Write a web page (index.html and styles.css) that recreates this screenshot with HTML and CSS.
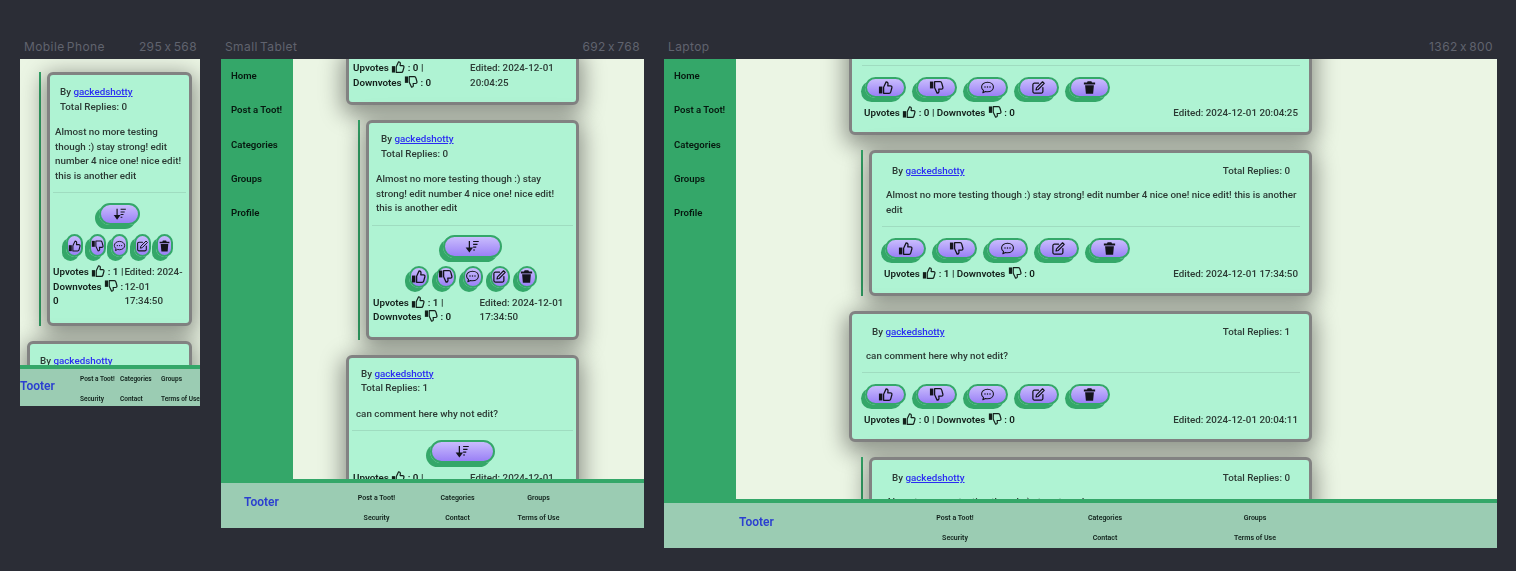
FILE: index.html
```html
<!DOCTYPE html>
<html lang="en">
<head>
  <meta charset="UTF-8" />
  <meta name="viewport" content="width=device-width, initial-scale=1.0" />
  <title>Tooter - Responsive Preview</title>
  <link rel="stylesheet" href="styles.css">
</head>
<body>
  <!-- ICONS -->
  <svg class="icon-defs" xmlns="http://www.w3.org/2000/svg">
    <symbol id="i-up" viewBox="0 0 24 24">
      <rect x="1.5" y="10.5" width="5.5" height="11" fill="currentColor"/>
      <path d="M9 11.5 13 3c2 0 3.2 1.5 3 3.4L15.6 9.5H20c1.6 0 2.6 1.400 2.200 2.900l-1.900 6.900c-.3 1.200-1.200 2-2.500 2H9z" fill="none" stroke="currentColor" stroke-width="2" stroke-linejoin="round"/>
    </symbol>
    <symbol id="i-down" viewBox="0 0 24 24">
      <rect x="1.5" y="2.5" width="5.5" height="11" fill="currentColor"/>
      <path d="M9 12.500 13 21c2 0 3.200-1.500 3-3.400l-.4-3.100H20c1.600 0 2.600-1.400 2.200-2.900L20.300 4.700c-.3-1.200-1.200-2-2.500-2H9z" fill="none" stroke="currentColor" stroke-width="2" stroke-linejoin="round"/>
    </symbol>
    <symbol id="i-chat" viewBox="0 0 24 24">
      <path d="M12 3.500c5.500 0 9.500 3.400 9.500 7.700s-4 7.700-9.500 7.700c-1.200 0-2.300-.2-3.300-.5L4.500 20.500l1.100-3.800C3.600 15.300 2.500 13.400 2.500 11.200 2.500 6.900 6.500 3.500 12 3.500z" fill="none" stroke="currentColor" stroke-width="1.700" stroke-linejoin="round"/>
      <circle cx="8" cy="11.200" r="1.200" fill="currentColor"/>
      <circle cx="12" cy="11.200" r="1.200" fill="currentColor"/>
      <circle cx="16" cy="11.200" r="1.200" fill="currentColor"/>
    </symbol>
    <symbol id="i-edit" viewBox="0 0 24 24">
      <path d="M12 5H5.500A2.500 2.500 0 0 0 3 7.500v11A2.500 2.500 0 0 0 5.500 21h11a2.500 2.500 0 0 0 2.500-2.500V12" fill="none" stroke="currentColor" stroke-width="2" stroke-linecap="round"/>
      <path d="M18.500 2.800 21.200 5.500 11.500 15.200 8 16l.8-3.500z" fill="none" stroke="currentColor" stroke-width="1.800" stroke-linejoin="round"/>
    </symbol>
    <symbol id="i-trash" viewBox="0 0 24 24">
      <path d="M9 2h6l1 2h5v3H3V4h5z" fill="currentColor"/>
      <path d="M5 8.500h14L17.800 22H6.200z" fill="currentColor"/>
    </symbol>
    <symbol id="i-sort" viewBox="0 0 24 24">
      <path d="M7 3v15M3 14.500 7 20l4-5.500z" fill="currentColor" stroke="currentColor" stroke-width="2"/>
      <path d="M13 4h9M13 8.500h7M13 13h5M13 17.500h3" fill="none" stroke="currentColor" stroke-width="1.800"/>
    </symbol>
  </svg>

  <div class="canvas">

    <!-- MOBILE PHONE -->
    <section class="frame frame-phone">
      <div class="frame-head"><span>Mobile Phone</span><span>295 x 568</span></div>
      <div class="screen">
        <div class="page">
          <main class="feed">
            <div class="reply">
              <article class="card">
                <div class="card-head"><span>By <a href="#">gackedshotty</a></span><span>Total Replies: 0</span></div>
                <p class="card-text">Almost no more testing though :) stay strong! edit number 4 nice one! nice edit! this is another edit</p>
                <hr>
                <div class="sort-row"><button class="btn btn-sort"><svg class="icon"><use href="#i-sort"/></svg></button></div>
                <div class="actions">
                  <button class="btn"><svg class="icon"><use href="#i-up"/></svg></button>
                  <button class="btn"><svg class="icon"><use href="#i-down"/></svg></button>
                  <button class="btn"><svg class="icon"><use href="#i-chat"/></svg></button>
                  <button class="btn"><svg class="icon"><use href="#i-edit"/></svg></button>
                  <button class="btn"><svg class="icon"><use href="#i-trash"/></svg></button>
                </div>
                <div class="stats">
                  <div class="votes">Upvotes <svg class="icon-sm"><use href="#i-up"/></svg> : 1 | Downvotes <svg class="icon-sm"><use href="#i-down"/></svg> : 0</div>
                  <div class="edited">Edited: 2024-12-01 17:34:50</div>
                </div>
              </article>
            </div>
            <article class="card">
              <div class="card-head"><span>By <a href="#">gackedshotty</a></span><span>Total Replies: 1</span></div>
              <p class="card-text">can comment here why not edit?</p>
            </article>
          </main>
        </div>
        <footer class="site-footer">
          <a class="brand" href="#">Tooter</a>
          <div class="footer-links">
            <a href="#">Post a Toot!</a><a href="#">Categories</a><a href="#">Groups</a>
            <a href="#">Security</a><a href="#">Contact</a><a href="#">Terms of Use</a>
          </div>
        </footer>
      </div>
    </section>

    <!-- SMALL TABLET -->
    <section class="frame frame-tablet">
      <div class="frame-head"><span>Small Tablet</span><span>692 x 768</span></div>
      <div class="screen">
        <div class="page">
          <nav class="side-nav">
            <a href="#">Home</a><a href="#">Post a Toot!</a><a href="#">Categories</a><a href="#">Groups</a><a href="#">Profile</a>
          </nav>
          <main class="feed">
            <article class="card">
              <div class="stats">
                <div class="votes">Upvotes <svg class="icon-sm"><use href="#i-up"/></svg> : 0 | Downvotes <svg class="icon-sm"><use href="#i-down"/></svg> : 0</div>
                <div class="edited">Edited: 2024-12-01 20:04:25</div>
              </div>
            </article>
            <div class="reply">
              <article class="card">
                <div class="card-head"><span>By <a href="#">gackedshotty</a></span><span>Total Replies: 0</span></div>
                <p class="card-text">Almost no more testing though :) stay strong! edit number 4 nice one! nice edit! this is another edit</p>
                <hr>
                <div class="sort-row"><button class="btn btn-sort"><svg class="icon"><use href="#i-sort"/></svg></button></div>
                <div class="actions">
                  <button class="btn"><svg class="icon"><use href="#i-up"/></svg></button>
                  <button class="btn"><svg class="icon"><use href="#i-down"/></svg></button>
                  <button class="btn"><svg class="icon"><use href="#i-chat"/></svg></button>
                  <button class="btn"><svg class="icon"><use href="#i-edit"/></svg></button>
                  <button class="btn"><svg class="icon"><use href="#i-trash"/></svg></button>
                </div>
                <div class="stats">
                  <div class="votes">Upvotes <svg class="icon-sm"><use href="#i-up"/></svg> : 1 | Downvotes <svg class="icon-sm"><use href="#i-down"/></svg> : 0</div>
                  <div class="edited">Edited: 2024-12-01 17:34:50</div>
                </div>
              </article>
            </div>
            <article class="card">
              <div class="card-head"><span>By <a href="#">gackedshotty</a></span><span>Total Replies: 1</span></div>
              <p class="card-text">can comment here why not edit?</p>
              <hr>
              <div class="sort-row"><button class="btn btn-sort"><svg class="icon"><use href="#i-sort"/></svg></button></div>
              <div class="stats">
                <div class="votes">Upvotes <svg class="icon-sm"><use href="#i-up"/></svg> : 0 | Downvotes <svg class="icon-sm"><use href="#i-down"/></svg> : 0</div>
                <div class="edited">Edited: 2024-12-01 20:04:11</div>
              </div>
            </article>
          </main>
        </div>
        <footer class="site-footer">
          <a class="brand" href="#">Tooter</a>
          <div class="footer-links">
            <a href="#">Post a Toot!</a><a href="#">Categories</a><a href="#">Groups</a>
            <a href="#">Security</a><a href="#">Contact</a><a href="#">Terms of Use</a>
          </div>
        </footer>
      </div>
    </section>

    <!-- LAPTOP -->
    <section class="frame frame-laptop">
      <div class="frame-head"><span>Laptop</span><span>1362 x 800</span></div>
      <div class="screen">
        <div class="page">
          <nav class="side-nav">
            <a href="#">Home</a><a href="#">Post a Toot!</a><a href="#">Categories</a><a href="#">Groups</a><a href="#">Profile</a>
          </nav>
          <main class="feed">
            <article class="card">
              <div class="card-head"><span>By <a href="#">gackedshotty</a></span><span>Total Replies: 1</span></div>
              <p class="card-text">can comment here why not edit?</p>
              <hr>
              <div class="actions">
                <button class="btn"><svg class="icon"><use href="#i-up"/></svg></button>
                <button class="btn"><svg class="icon"><use href="#i-down"/></svg></button>
                <button class="btn"><svg class="icon"><use href="#i-chat"/></svg></button>
                <button class="btn"><svg class="icon"><use href="#i-edit"/></svg></button>
                <button class="btn"><svg class="icon"><use href="#i-trash"/></svg></button>
              </div>
              <div class="stats">
                <div class="votes">Upvotes <svg class="icon-sm"><use href="#i-up"/></svg> : 0 | Downvotes <svg class="icon-sm"><use href="#i-down"/></svg> : 0</div>
                <div class="edited">Edited: 2024-12-01 20:04:25</div>
              </div>
            </article>
            <div class="reply">
              <article class="card">
                <div class="card-head"><span>By <a href="#">gackedshotty</a></span><span>Total Replies: 0</span></div>
                <p class="card-text">Almost no more testing though :) stay strong! edit number 4 nice one! nice edit! this is another edit</p>
                <hr>
                <div class="actions">
                  <button class="btn"><svg class="icon"><use href="#i-up"/></svg></button>
                  <button class="btn"><svg class="icon"><use href="#i-down"/></svg></button>
                  <button class="btn"><svg class="icon"><use href="#i-chat"/></svg></button>
                  <button class="btn"><svg class="icon"><use href="#i-edit"/></svg></button>
                  <button class="btn"><svg class="icon"><use href="#i-trash"/></svg></button>
                </div>
                <div class="stats">
                  <div class="votes">Upvotes <svg class="icon-sm"><use href="#i-up"/></svg> : 1 | Downvotes <svg class="icon-sm"><use href="#i-down"/></svg> : 0</div>
                  <div class="edited">Edited: 2024-12-01 17:34:50</div>
                </div>
              </article>
            </div>
            <article class="card">
              <div class="card-head"><span>By <a href="#">gackedshotty</a></span><span>Total Replies: 1</span></div>
              <p class="card-text">can comment here why not edit?</p>
              <hr>
              <div class="actions">
                <button class="btn"><svg class="icon"><use href="#i-up"/></svg></button>
                <button class="btn"><svg class="icon"><use href="#i-down"/></svg></button>
                <button class="btn"><svg class="icon"><use href="#i-chat"/></svg></button>
                <button class="btn"><svg class="icon"><use href="#i-edit"/></svg></button>
                <button class="btn"><svg class="icon"><use href="#i-trash"/></svg></button>
              </div>
              <div class="stats">
                <div class="votes">Upvotes <svg class="icon-sm"><use href="#i-up"/></svg> : 0 | Downvotes <svg class="icon-sm"><use href="#i-down"/></svg> : 0</div>
                <div class="edited">Edited: 2024-12-01 20:04:11</div>
              </div>
            </article>
            <div class="reply">
              <article class="card">
                <div class="card-head"><span>By <a href="#">gackedshotty</a></span><span>Total Replies: 0</span></div>
                <p class="card-text">Almost no more testing though :) stay strong!</p>
              </article>
            </div>
          </main>
        </div>
        <footer class="site-footer">
          <a class="brand" href="#">Tooter</a>
          <div class="footer-links">
            <a href="#">Post a Toot!</a><a href="#">Categories</a><a href="#">Groups</a>
            <a href="#">Security</a><a href="#">Contact</a><a href="#">Terms of Use</a>
          </div>
        </footer>
      </div>
    </section>

  </div>
</body>
</html>
```

FILE: styles.css
```css
* {
  box-sizing: border-box;
}

html, body {
  height: 100%;
}

body {
  margin: 0;
  background-color: #2b2d36;
  font-family: "Roboto", "Liberation Sans", sans-serif;
  overflow: hidden;
}

.icon-defs {
  display: none;
}

.canvas {
  display: flex;
  align-items: flex-start;
  padding: 40px 0 0 20px;
}

/* FRAMES */
.frame-phone { width: 180px; margin-right: 21px; }
.frame-tablet { width: 423px; margin-right: 20px; }
.frame-laptop { width: 833px; }

.frame-head {
  display: flex;
  justify-content: space-between;
  height: 19px;
  padding: 0 4px;
  font-family: "Inter", sans-serif;
  font-size: 12px;
  line-height: 14px;
  letter-spacing: 0.4px;
  word-spacing: -1.5px;
  color: #60636e;
}

.frame-phone .frame-head { padding-right: 3px; }

.screen {
  display: flex;
  flex-direction: column;
  overflow: hidden;
  filter: blur(0.4px);
}

.frame-phone .screen { height: 347px; }
.frame-tablet .screen { height: 469px; }
.frame-laptop .screen { height: 489px; }

.page {
  flex: 1;
  display: flex;
  min-height: 0;
  overflow: hidden;
  background-color: #ebf5e4;
}

/* SIDE NAV */
.side-nav {
  flex: 0 0 72px;
  display: flex;
  flex-direction: column;
  gap: 20px;
  padding: 10px 0 0 10px;
  background-color: #34a769;
}

.side-nav a {
  font-size: 9.6px;
  font-weight: 600;
  line-height: 14.3px;
  color: #06180f;
  text-decoration: none;
  white-space: nowrap;
}

/* FEED */
.feed {
  flex: 1;
  min-width: 0;
  display: flex;
  flex-direction: column;
  gap: 15px;
}

.frame-phone .feed { padding: 13px 8px 0 7px; }
.frame-tablet .feed { padding: 0 65px 0 53px; }
.frame-laptop .feed { padding: 0 185px 0 113px; }

.frame-tablet .feed > .card:first-child { margin-top: -9px; }
.frame-laptop .feed > .card:first-child { margin-top: -55px; }

.reply {
  flex: none;
  margin-left: 12px;
  padding-left: 6px;
  border-left: 2px solid #34a769;
}

.card {
  flex: none;
  border: 3px solid #828282;
  border-radius: 6px;
  background-color: #aff3d3;
  box-shadow: 0 6px 22px 4px rgba(0, 0, 0, 0.4);
  font-size: 9.8px;
  font-weight: 500;
  line-height: 14.5px;
  color: #2c3a34;
}

.card-head {
  display: flex;
  flex-direction: column;
  padding: 10px 10px 0;
}

.frame-tablet .card-head { padding: 9px 12px 0; }

.frame-laptop .card-head {
  flex-direction: row;
  justify-content: space-between;
  padding: 11px 19px 0 20px;
}

.card-head a {
  color: #2b2cf2;
}

.card-text {
  margin: 11px 0 9px;
  padding: 0 5px;
}

.frame-tablet .card-text { padding: 0 7px; }

.frame-laptop .card-text {
  margin: 8px 0 9px;
  padding: 0 8px 0 14px;
  line-height: 15px;
}

.card hr {
  height: 1px;
  margin: 0 3px;
  border: none;
  background-color: #9fdcc0;
}

.frame-laptop .card hr { margin: 0 9px 0 10px; }

/* BUTTONS */
.btn {
  display: flex;
  align-items: center;
  justify-content: center;
  height: 23px;
  padding: 0;
  border: 2px solid #34a769;
  border-radius: 12px;
  background: linear-gradient(#c9bcfd, #9a80f6);
  box-shadow: -4px 4px 0 #34a769;
  color: #14141c;
}

.sort-row {
  display: flex;
  justify-content: center;
  margin-top: 10px;
}

.frame-tablet .sort-row { margin-top: 9px; }

.btn-sort {
  width: 28.800%;
  height: 23px;
}

.frame-phone .btn-sort { height: 22px; }

.actions {
  display: flex;
  justify-content: center;
  gap: 5.500px;
  margin-top: 9px;
}

.actions .btn {
  width: 17px;
  height: 23px;
}

.frame-tablet .actions {
  gap: 7px;
  margin-top: 8px;
}

.frame-tablet .actions .btn {
  width: 20px;
  height: 22px;
}

.frame-laptop .actions {
  justify-content: flex-start;
  gap: 10px;
  margin-top: 11px;
  padding-left: 13px;
}

.frame-laptop .actions .btn {
  width: 41px;
  height: 21px;
}

.icon {
  width: 14px;
  height: 14px;
}

.frame-tablet .icon,
.frame-laptop .icon {
  width: 15px;
  height: 15px;
}

.icon-sm {
  width: 14px;
  height: 14px;
  margin: -4px 0;
  vertical-align: 1px;
  color: #14201b;
}

/* STATS */
.stats {
  display: flex;
  margin-top: 8px;
  padding: 0 0 14px 3px;
}

.frame-tablet .stats { padding: 0 0 12px 4px; }

.votes {
  flex: 0 0 52.500%;
  font-weight: 600;
  color: #14201b;
}

.edited {
  flex: 1;
}

.frame-laptop .stats {
  justify-content: space-between;
  margin-top: 8px;
  padding: 0 11px 12px 12px;
}

.frame-laptop .votes,
.frame-laptop .edited {
  flex: none;
}

/* FOOTER */
.site-footer {
  flex: none;
  display: flex;
  border-top: 4px solid #34a769;
  background-color: #9bccb3;
}

.frame-phone .site-footer { height: 41px; }
.frame-tablet .site-footer,
.frame-laptop .site-footer { height: 49px; }

.brand {
  font-size: 12px;
  font-weight: 600;
  line-height: 14px;
  color: #2b3fd0;
  text-decoration: none;
}

.frame-phone .brand { flex: 0 0 60px; margin-top: 10px; }
.frame-tablet .brand { flex: 0 0 115px; margin-top: 12px; padding-left: 23px; }
.frame-laptop .brand { flex: 0 0 216px; margin-top: 12px; padding-left: 75px; }

.footer-links {
  display: grid;
  grid-template-columns: repeat(3, 1fr);
  grid-auto-rows: 20px;
  text-align: center;
  padding-top: 5px;
}

.footer-links a {
  font-size: 7px;
  font-weight: 600;
  line-height: 20px;
  color: #10201a;
  text-decoration: none;
  white-space: nowrap;
}

.frame-phone .footer-links {
  grid-template-columns: 40px 41px 40px;
  padding-top: 0;
  text-align: left;
}

.frame-phone .footer-links a { font-size: 6.5px; }

.frame-tablet .footer-links { width: 243px; }
.frame-laptop .footer-links { width: 450px; }
```
